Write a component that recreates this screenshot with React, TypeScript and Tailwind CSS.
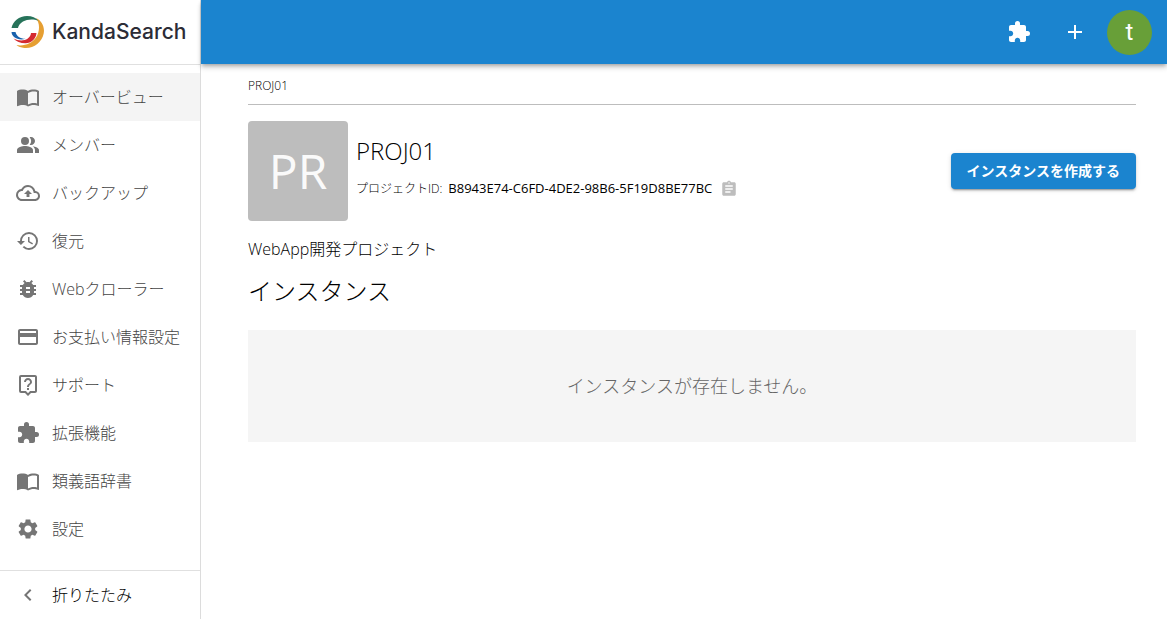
import React from "react";
import {
  MdAdd,
  MdAssignment,
  MdBugReport,
  MdChevronLeft,
  MdExtension,
  MdHistory,
  MdImportContacts,
  MdOutlineBackup,
  MdOutlineLiveHelp,
  MdPayment,
  MdPeopleAlt,
  MdSettings,
} from "react-icons/md";

const menuItems = [
  { label: "オーバービュー", icon: MdImportContacts },
  { label: "メンバー", icon: MdPeopleAlt },
  { label: "バックアップ", icon: MdOutlineBackup },
  { label: "復元", icon: MdHistory },
  { label: "Webクローラー", icon: MdBugReport },
  { label: "お支払い情報設定", icon: MdPayment },
  { label: "サポート", icon: MdOutlineLiveHelp },
  { label: "拡張機能", icon: MdExtension },
  { label: "類義語辞書", icon: MdImportContacts },
  { label: "設定", icon: MdSettings },
];

const Logo = () => (
  <a href="#" className="flex h-16 items-center gap-2 pl-[11px]">
    <svg className="h-8 w-[33px] shrink-0" viewBox="0 0 33 32" aria-hidden="true">
      <path
        d="M25 2C30.500 4.500 34 10.500 32.700 17.500C31 27 21 33.500 12 31.700C9 31.200 7 30.300 5.500 29C13 30.500 21 27.500 25 21.500C29 15 29 7.500 25 2Z"
        fill="#e69f32"
      />
      <path
        d="M0.500 12C2 5 8 0 16 0C21 0 25 1.800 27.500 5C22 2.500 16 3.500 12 5.500C9 7.300 7.500 9.500 7 12Z"
        fill="#27735a"
      />
      <path
        d="M25.500 17C25 23 20.500 27.200 14.500 27.200C9.500 27.200 5 25.500 2.500 22.500C7 25 13 25.200 16.500 22.800C18.500 21.300 19.800 19.500 20 17Z"
        fill="#d42a30"
      />
      <path
        d="M0.500 16H4.500C5.500 20 9 22.800 14.500 22.800C10.500 24.300 6 23.300 3 21C1.500 19.500 0.700 18 0.500 16Z"
        fill="#1a62ad"
      />
    </svg>
    <span className="font-['Inter',sans-serif] text-[21px] leading-8 font-medium text-[#2c2c36]">
      KandaSearch
    </span>
  </a>
);

const Sidebar = () => (
  <aside className="box-content flex w-50 shrink-0 flex-col border-r border-[#dcdcdc] bg-white">
    <Logo />
    <nav className="flex-1 border-t border-[#e0e0e0] pt-2">
      <ul>
        {menuItems.map(({ label, icon: Icon }, index) => (
          <li key={label}>
            <a
              href="#"
              className={`flex h-12 items-center gap-3 px-4 text-base font-light text-[#444] ${
                index === 0 ? "bg-[#f4f4f4]" : ""
              }`}
            >
              <Icon className="size-6 shrink-0 text-[#757575]" />
              <span className="whitespace-nowrap">{label}</span>
            </a>
          </li>
        ))}
      </ul>
    </nav>
    <div className="border-t border-[#e0e0e0]">
      <button
        type="button"
        className="flex h-12 w-full items-center gap-3 px-4 text-base font-light"
      >
        <MdChevronLeft className="size-6 text-[#757575]" />
        <span>折りたたみ</span>
      </button>
    </div>
  </aside>
);

const Header = () => (
  <header className="flex h-16 shrink-0 items-center justify-end bg-[#1b84cf] pr-[15px] text-white shadow-[0_2px_4px_-1px_rgba(0,0,0,0.3),0_4px_5px_rgba(0,0,0,0.14)]">
    <button type="button" aria-label="拡張機能" className="p-4">
      <MdExtension className="size-6" />
    </button>
    <button type="button" aria-label="追加" className="p-4">
      <MdAdd className="size-6" />
    </button>
    <button
      type="button"
      className="ml-1 flex size-[45px] items-center justify-center rounded-full bg-[#689f38] font-['Roboto',sans-serif] text-2xl leading-none"
    >
      t
    </button>
  </header>
);

const App = () => {
  return (
    <div className="flex min-h-screen bg-white font-['Open_Sans','Noto_Sans_CJK_JP',sans-serif] text-black">
      <Sidebar />
      <div className="flex min-w-0 flex-1 flex-col">
        <Header />
        <main className="pr-[31px] pl-[47px]">
          <div className="flex h-[41px] items-center border-b border-[#bdbdbd] pt-1 text-xs font-light">
            <a href="#">PROJ01</a>
          </div>
          <section className="mt-4 flex items-center gap-2">
            <div className="flex size-[100px] shrink-0 items-center justify-center rounded bg-[#bdbdbd] text-5xl text-[#fafafa]">
              PR
            </div>
            <div className="min-w-0 flex-1">
              <h1 className="text-2xl leading-8 font-light">PROJ01</h1>
              <div className="mt-3 mb-2 flex h-5 items-center whitespace-nowrap">
                <span className="text-xs font-light">プロジェクトID:</span>
                <span className="ml-1.5 text-[13px]">B8943E74-C6FD-4DE2-98B6-5F19D8BE77BC</span>
                <button type="button" aria-label="コピー" className="ml-2 text-[#bdbdbd]">
                  <MdAssignment className="size-[18px]" />
                </button>
              </div>
            </div>
            <button
              type="button"
              className="h-9 shrink-0 rounded bg-[#1b84cf] px-4 text-sm font-bold text-white shadow-[0_3px_1px_-2px_rgba(0,0,0,0.2),0_2px_2px_rgba(0,0,0,0.14),0_1px_5px_rgba(0,0,0,0.12)]"
            >
              インスタンスを作成する
            </button>
          </section>
          <p className="mt-4 text-base font-light">WebApp開発プロジェクト</p>
          <h2 className="mt-3 text-2xl leading-9 font-light">インスタンス</h2>
          <div className="mt-[21px] flex h-28 items-center justify-center bg-[#f5f5f5] text-lg font-light text-[#666]">
            インスタンスが存在しません。
          </div>
        </main>
      </div>
    </div>
  );
};

export default App;
